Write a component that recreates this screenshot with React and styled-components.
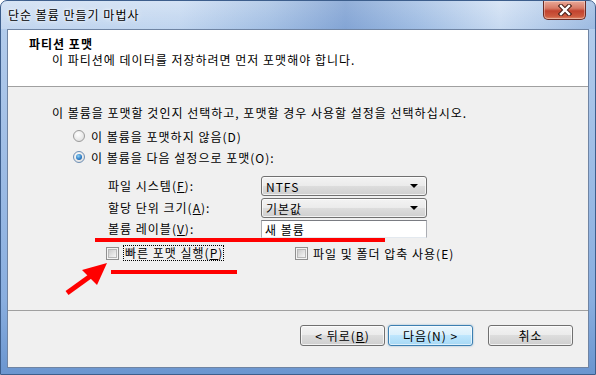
import React from "react";
import styled, { createGlobalStyle, css } from "styled-components";

const GlobalStyle = createGlobalStyle`
  html, body {
    margin: 0;
    padding: 0;
    background: #ffffff;
  }
  body {
    font-family: "Noto Sans CJK KR", "Noto Sans", sans-serif;
    font-size: 12px;
    letter-spacing: 1px;
    color: #000;
  }
`;

const Window = styled.div`
  position: relative;
  width: 596px;
  height: 375px;
  box-sizing: border-box;
  border: 1px solid #3d5e8c;
  border-radius: 7px 7px 0 0;
  padding: 0 6px 6px 6px;
  display: flex;
  flex-direction: column;
  overflow: hidden;
  background:
    linear-gradient(to bottom, rgba(255,255,255,0.3), rgba(255,255,255,0) 30px),
    linear-gradient(to bottom, #b7cfed 0, #a4c1e7 120px, #89aedf 300px, #6a95cf 375px);
`;

const TitleBar = styled.div`
  height: 28px;
  margin: 0 -6px;
  padding: 0 9px 0 7px;
  display: flex;
  justify-content: space-between;
  align-items: flex-start;
  background: linear-gradient(to right,
    rgba(255,255,255,0.2) 0%, rgba(255,255,255,0.15) 30%,
    rgba(60,110,180,0.15) 45%, rgba(40,90,170,0.35) 58%,
    rgba(70,120,190,0.2) 70%, rgba(255,255,255,0.25) 84%,
    rgba(60,110,180,0.2) 100%);
`;

const Title = styled.span`
  margin-top: 6px;
  line-height: 16px;
  color: #000;
  text-shadow: 0 0 6px rgba(255,255,255,0.9), 0 0 3px rgba(255,255,255,0.9);
`;

const CloseButton = styled.div`
  width: 43px;
  height: 19px;
  box-sizing: border-box;
  border: 1px solid #6b2b24;
  border-top: none;
  border-radius: 0 0 5px 5px;
  display: flex;
  align-items: center;
  justify-content: center;
  background: linear-gradient(to bottom, #e9a999 0%, #d77a66 40%, #c2432f 55%, #cd5a3f 85%, #e08c6c 100%);
  box-shadow: inset 0 0 0 1px rgba(255,255,255,0.35);
`;

const Client = styled.div`
  flex: 1;
  display: flex;
  flex-direction: column;
  border: 1px solid #6f84a3;
  background: #f0f0f0;
`;

const Header = styled.div`
  height: 57px;
  box-sizing: border-box;
  padding: 6px 0 0 21px;
  background: #ffffff;
  border-bottom: 1px solid #a0a0a0;
`;

const HeaderTitle = styled.div`
  font-weight: bold;
  line-height: 16px;
`;

const HeaderText = styled.div`
  line-height: 16px;
  padding-left: 23px;
`;

const Body = styled.div`
  flex: 1;
  padding: 18px 0 0 44px;
  display: flex;
  flex-direction: column;
`;

const Line = styled.div`
  line-height: 16px;
  white-space: nowrap;
`;

const RadioGroup = styled.div`
  margin: 7px 0 0 21px;
  display: flex;
  flex-direction: column;
  gap: 5px;
`;

const OptionRow = styled.label`
  display: flex;
  align-items: center;
  gap: 4px;
  height: 16px;
  white-space: nowrap;
`;

const Radio = styled.span`
  width: 12px;
  height: 12px;
  box-sizing: border-box;
  border-radius: 50%;
  border: 1px solid #9a9a9a;
  background: radial-gradient(circle at 40% 35%, #ffffff, #e4e4e4 70%, #d0d0d0);
  display: flex;
  align-items: center;
  justify-content: center;
  margin-right: 2px;
  ${(p) =>
    p.$checked &&
    css`
      border-color: #6d8fb5;
      &::after {
        content: "";
        width: 6px;
        height: 6px;
        border-radius: 50%;
        background: radial-gradient(circle at 40% 35%, #8fd3f7, #2a78c2 60%, #134f8c);
      }
    `}
`;

const FormGrid = styled.div`
  margin: 11px 0 0 56px;
  display: grid;
  grid-template-columns: 153px 166px;
  grid-template-rows: 20px 20px 18px;
  row-gap: 2px;
  align-items: center;
`;

const FieldLabel = styled.span`
  line-height: 16px;
  white-space: nowrap;
`;

const Combo = styled.div`
  height: 20px;
  box-sizing: border-box;
  border: 1px solid #707070;
  border-radius: 3px;
  padding: 0 8px 0 4px;
  display: flex;
  align-items: center;
  justify-content: space-between;
  background: linear-gradient(to bottom, #f3f3f3 0%, #ebebeb 49%, #dddddd 50%, #cfcfcf 100%);
  box-shadow: inset 0 0 0 1px rgba(255,255,255,0.7);
`;

const ComboArrow = styled.span`
  width: 0;
  height: 0;
  border-left: 4px solid transparent;
  border-right: 4px solid transparent;
  border-top: 4px solid #000;
`;

const TextBox = styled.div`
  height: 18px;
  box-sizing: border-box;
  border: 1px solid #abadb3;
  border-top-color: #7a7c82;
  border-bottom-color: #e3e9ef;
  background: #ffffff;
  padding: 0 3px;
  display: flex;
  align-items: center;
`;

const CheckRow = styled.div`
  margin: 7px 0 0 54px;
  display: grid;
  grid-template-columns: 189px auto;
`;

const Checkbox = styled.span`
  width: 13px;
  height: 13px;
  box-sizing: border-box;
  border: 1px solid #8f8f8f;
  background: #f4f4f4;
  display: flex;
  align-items: center;
  justify-content: center;
  margin-right: 1px;
  &::after {
    content: "";
    width: 7px;
    height: 7px;
    border: 1px solid #b8b8b8;
    background: linear-gradient(135deg, #cbcbcb, #f6f6f6);
  }
`;

const FocusText = styled.span`
  outline: 1px dotted #000;
  outline-offset: 0;
  padding: 0 0 0 1px;
  line-height: 14px;
`;

const Footer = styled.div`
  height: 42px;
  border-top: 1px solid #a0a0a0;
  padding: 14px 15px 0 0;
  display: flex;
  justify-content: flex-end;
  align-items: flex-start;
`;

const Button = styled.div`
  width: 85px;
  height: 21px;
  box-sizing: border-box;
  border: 1px solid #707070;
  border-radius: 3px;
  margin-left: ${(p) => p.$gap || 0}px;
  display: flex;
  align-items: center;
  justify-content: center;
  background: linear-gradient(to bottom, #f3f3f3 0%, #ebebeb 49%, #dddddd 50%, #cfcfcf 100%);
  box-shadow: inset 0 0 0 1px rgba(255,255,255,0.7);
  ${(p) =>
    p.$default &&
    css`
      border-color: #3c7fb1;
      background: linear-gradient(to bottom, #eaf6fd 0%, #d9f0fc 49%, #bee6fd 50%, #a7d9f5 100%);
      box-shadow: inset 0 0 0 1px rgba(255,255,255,0.6), 0 0 2px rgba(60,127,177,0.6);
    `}
`;

const Annotations = styled.svg`
  position: absolute;
  left: -1px;
  top: -1px;
  pointer-events: none;
`;

function CloseGlyph() {
  return (
    <svg width="14" height="12" viewBox="0 0 14 12">
      <path d="M3 2 L11 10 M11 2 L3 10" stroke="#4a2018" strokeWidth="4.5" strokeLinecap="square" />
      <path d="M3 2 L11 10 M11 2 L3 10" stroke="#ffffff" strokeWidth="2.4" strokeLinecap="square" />
    </svg>
  );
}

export default function App() {
  return (
    <>
      <GlobalStyle />
      <Window>
        <TitleBar>
          <Title>단순 볼륨 만들기 마법사</Title>
          <CloseButton>
            <CloseGlyph />
          </CloseButton>
        </TitleBar>
        <Client>
          <Header>
            <HeaderTitle>파티션 포맷</HeaderTitle>
            <HeaderText>이 파티션에 데이터를 저장하려면 먼저 포맷해야 합니다.</HeaderText>
          </Header>
          <Body>
            <Line>이 볼륨을 포맷할 것인지 선택하고, 포맷할 경우 사용할 설정을 선택하십시오.</Line>
            <RadioGroup>
              <OptionRow>
                <Radio />
                이 볼륨을 포맷하지 않음(D)
              </OptionRow>
              <OptionRow>
                <Radio $checked />
                이 볼륨을 다음 설정으로 포맷(O):
              </OptionRow>
            </RadioGroup>
            <FormGrid>
              <FieldLabel>
                파일 시스템(<u>F</u>):
              </FieldLabel>
              <Combo>
                NTFS
                <ComboArrow />
              </Combo>
              <FieldLabel>
                할당 단위 크기(<u>A</u>):
              </FieldLabel>
              <Combo>
                기본값
                <ComboArrow />
              </Combo>
              <FieldLabel>
                볼륨 레이블(<u>V</u>):
              </FieldLabel>
              <TextBox>새 볼륨</TextBox>
            </FormGrid>
            <CheckRow>
              <OptionRow>
                <Checkbox />
                <FocusText>
                  빠른 포맷 실행(<u>P</u>)
                </FocusText>
              </OptionRow>
              <OptionRow>
                <Checkbox />
                파일 및 폴더 압축 사용(E)
              </OptionRow>
            </CheckRow>
          </Body>
          <Footer>
            <Button>
              &lt; 뒤로(<u>B</u>)
            </Button>
            <Button $default $gap={3}>
              다음(N) &gt;
            </Button>
            <Button $gap={15}>취소</Button>
          </Footer>
        </Client>
        <Annotations width="596" height="375" viewBox="0 0 596 375">
          <rect x="95" y="238" width="290" height="4" fill="#ff0000" />
          <rect x="111" y="270" width="126" height="4" fill="#ff0000" />
          <line x1="67" y1="293" x2="92" y2="275" stroke="#ff0000" strokeWidth="5" />
          <polygon points="107,263 82,270 97,285" fill="#ff0000" />
        </Annotations>
      </Window>
    </>
  );
}
